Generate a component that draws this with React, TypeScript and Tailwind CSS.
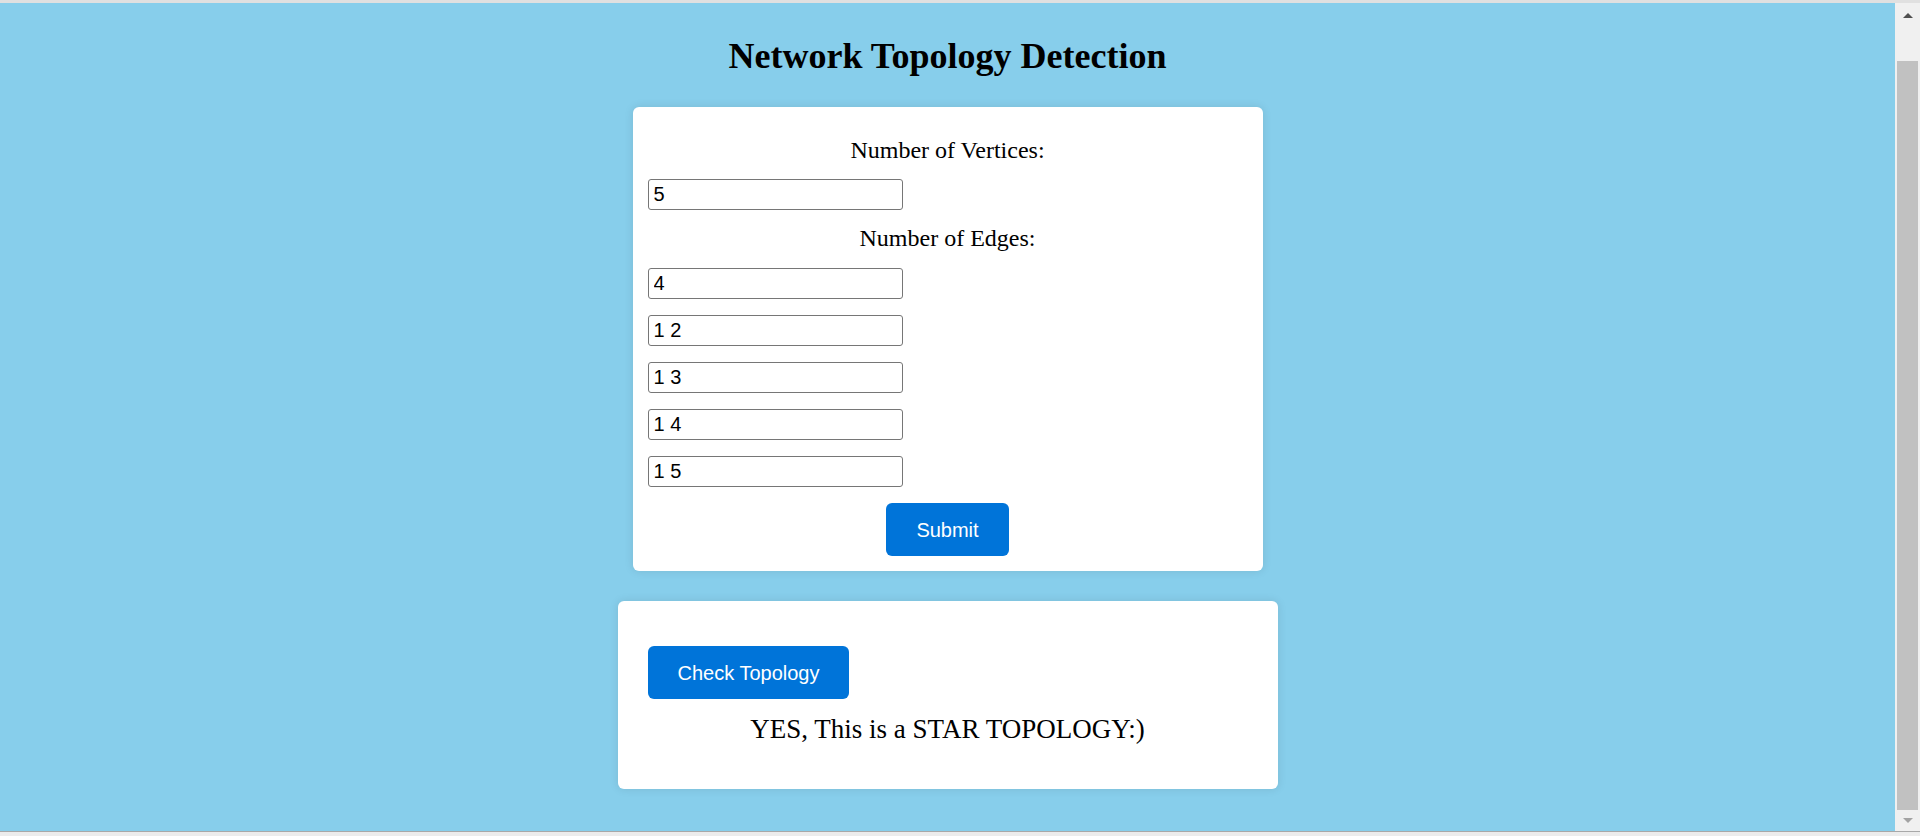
import { useState } from "react";

const edgesInit = ["4", "1 2", "1 3", "1 4", "1 5"];

function Scrollbar() {
  return (
    <div className="w-[25px] bg-[#f0f0f0] flex flex-col">
      {/* up button */}
      <div className="h-[24px] flex items-center justify-center">
        <div className="w-0 h-0 border-x-[5px] border-x-transparent border-b-[5px] border-b-[#505050]" />
      </div>
      <div className="h-[34px]" />
      {/* thumb */}
      <div className="flex-1 mx-[2px] bg-[#c1c1c1]" />
      {/* down button */}
      <div className="h-[21px] flex items-center justify-center">
        <div className="w-0 h-0 border-x-[5px] border-x-transparent border-t-[5px] border-t-[#a3a3a3]" />
      </div>
    </div>
  );
}

export default function App() {
  const [vertices, setVertices] = useState("5");
  const [edges, setEdges] = useState<string[]>(edgesInit);

  const inputCls =
    "w-[255px] h-[31px] border border-[#767676] rounded-[3px] px-[5px] text-[20px] text-black bg-white font-['Liberation_Sans',Arial,sans-serif] outline-none";
  const btnCls =
    "h-[53px] px-[30px] bg-[#0074d9] text-white text-[20px] rounded-[6px] font-['Liberation_Sans',Arial,sans-serif]";

  return (
    <div className="w-[1920px] h-[836px] overflow-hidden flex flex-col bg-[#ececec]">
      {/* browser top edge */}
      <div className="h-[3px] bg-[#e0e0e0]" />

      <div className="flex flex-1 min-h-0">
        <main className="flex-1 bg-[#87ceeb] flex flex-col items-center pt-[34px] font-['Liberation_Serif','Times_New_Roman',serif] text-black">
          <h1 className="text-[36px] leading-[39px] font-bold">
            Network Topology Detection
          </h1>

          {/* Input form */}
          <section className="mt-[31px] w-[630px] bg-white rounded-[6px] shadow-[0_0_10px_rgba(0,0,0,0.1)] p-[15px] flex flex-col items-start">
            <label className="mt-[15px] self-stretch text-center text-[24px] leading-[27px]">
              Number of Vertices:
            </label>
            <input
              className={`mt-[15px] ${inputCls}`}
              value={vertices}
              onChange={(e) => setVertices(e.target.value)}
            />
            <label className="mt-[15px] self-stretch text-center text-[24px] leading-[27px]">
              Number of Edges:
            </label>
            {edges.map((edge, i) => (
              <input
                key={i}
                className={`mt-[16px] ${inputCls}`}
                value={edge}
                onChange={(e) =>
                  setEdges((prev) =>
                    prev.map((v, j) => (j === i ? e.target.value : v)),
                  )
                }
              />
            ))}
            <button className={`mt-[16px] self-center ${btnCls}`}>Submit</button>
          </section>

          {/* Result */}
          <section className="mt-[30px] w-[660px] bg-white rounded-[6px] shadow-[0_0_10px_rgba(0,0,0,0.1)] pt-[45px] px-[30px] pb-[45px] flex flex-col items-start">
            <button className={btnCls}>Check Topology</button>
            <p className="mt-[16px] self-stretch text-center text-[27px] leading-[29px]">
              YES, This is a STAR TOPOLOGY:)
            </p>
          </section>
        </main>

        <Scrollbar />
      </div>

      {/* browser bottom edge */}
      <div className="h-[5px] border-t border-[#a8a8a8] bg-[#ececec]" />
    </div>
  );
}
